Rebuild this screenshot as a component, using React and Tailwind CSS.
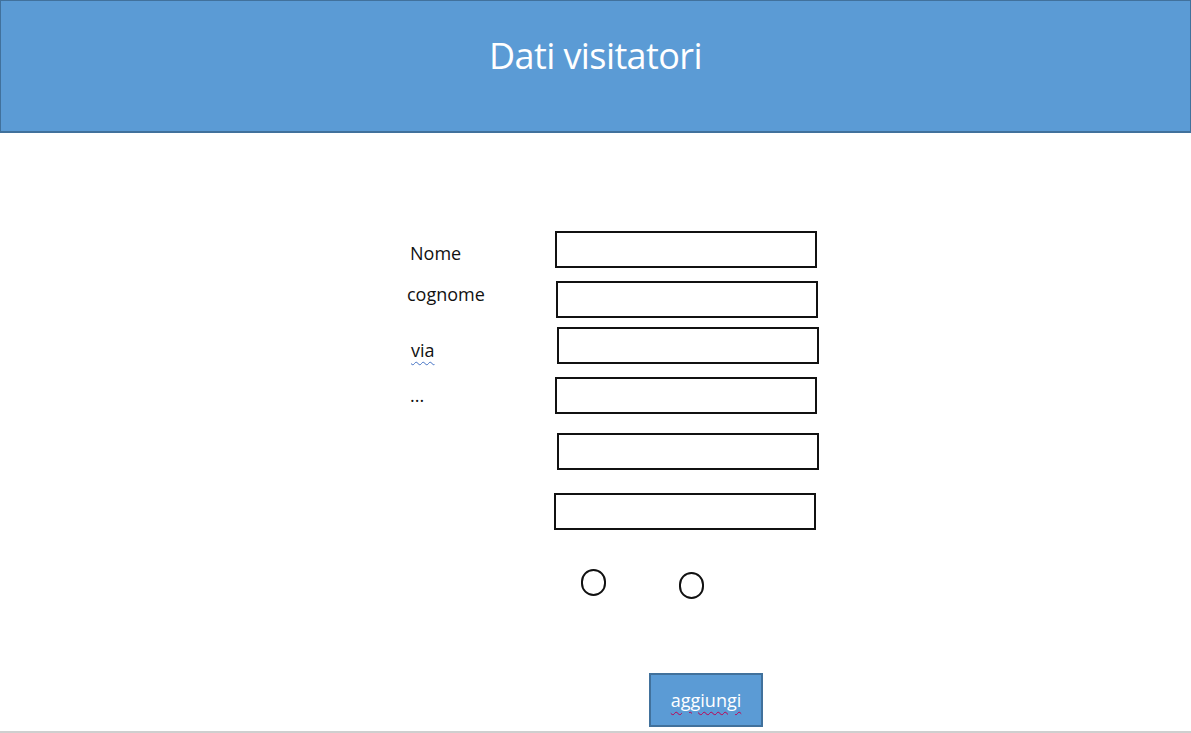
import React from 'react';

function Field({ className = '' }) {
  return <div className={`w-[262px] h-[37px] border-2 border-[#111] bg-white ${className}`}></div>;
}

export default function App() {
  return (
    <div className="w-[1191px] h-[733px] bg-white flex flex-col border-b-2 border-[#cfcfcf] overflow-hidden" style={{ fontFamily: '"Open Sans", "Liberation Sans", sans-serif' }}>
      {/* Header */}
      <header className="h-[133px] shrink-0 bg-[#5B9BD5] border border-[#41719C] border-b-2 flex justify-center">
        <h1 className="mt-[32px] text-[36px] leading-[46px] text-white tracking-[-0.6px]">Dati visitatori</h1>
      </header>

      {/* Form */}
      <main className="flex-1 flex flex-col pl-[407px] pt-[98px] text-[18px] text-[#111]">
        <div className="flex items-start">
          <span className="w-[148px] pl-[3px] mt-[10px] leading-[24px]">Nome</span>
          <Field />
        </div>
        <div className="flex items-start mt-[13px]">
          <span className="w-[149px] mt-[1px] leading-[24px]">cognome</span>
          <Field />
        </div>
        <div className="flex items-start mt-[9px]">
          <span className="w-[150px] pl-[4px] mt-[11px] leading-[24px]">
            <span className="underline decoration-wavy decoration-[#4472C4] decoration-1 underline-offset-4">via</span>
          </span>
          <Field />
        </div>
        <div className="flex items-start mt-[13px]">
          <span className="w-[148px] pl-[3px] mt-[6px] leading-[24px]">...</span>
          <Field />
        </div>
        <div className="flex mt-[19px] pl-[150px]">
          <Field />
        </div>
        <div className="flex mt-[23px] pl-[147px]">
          <Field />
        </div>

        {/* Radio options */}
        <div className="flex items-start mt-[39px] pl-[174px]">
          <div className="w-[25px] h-[27px] rounded-full border-2 border-[#111]"></div>
          <div className="w-[25px] h-[27px] rounded-full border-2 border-[#111] ml-[73px] mt-[3px]"></div>
        </div>

        <div className="mt-[74px] pl-[242px]">
          <button className="w-[114px] h-[54px] bg-[#5B9BD5] border-2 border-[#41719C] text-white text-[18px] flex items-center justify-center">
            <span className="underline decoration-wavy decoration-[#C0004F] decoration-1 underline-offset-4">aggiungi</span>
          </button>
        </div>
      </main>
    </div>
  );
}
